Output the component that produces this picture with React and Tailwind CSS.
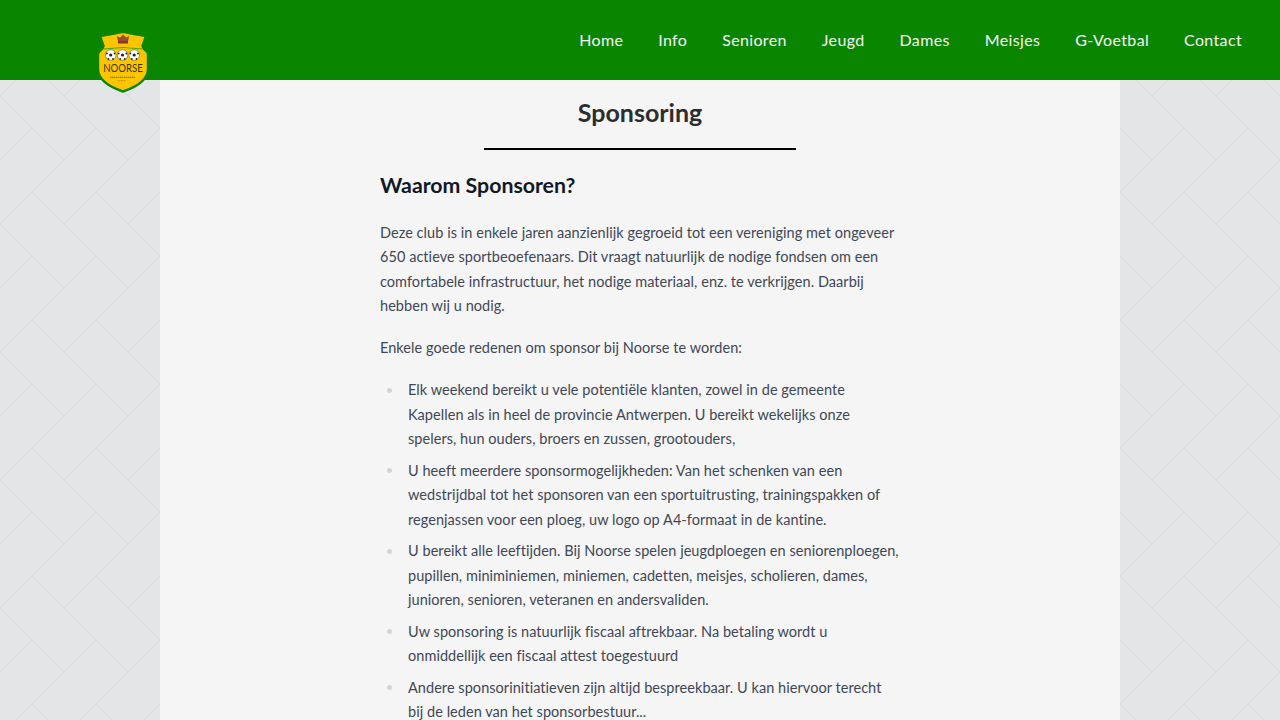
const NAV = ['Home', 'Info', 'Senioren', 'Jeugd', 'Dames', 'Meisjes', 'G-Voetbal', 'Contact'];

const REASONS = [
  'Elk weekend bereikt u vele potentiële klanten, zowel in de gemeente Kapellen als in heel de provincie Antwerpen. U bereikt wekelijks onze spelers, hun ouders, broers en zussen, grootouders,',
  'U heeft meerdere sponsormogelijkheden: Van het schenken van een wedstrijdbal tot het sponsoren van een sportuitrusting, trainingspakken of regenjassen voor een ploeg, uw logo op A4-formaat in de kantine.',
  'U bereikt alle leeftijden. Bij Noorse spelen jeugdploegen en seniorenploegen, pupillen, miniminiemen, miniemen, cadetten, meisjes, scholieren, dames, junioren, senioren, veteranen en andersvaliden.',
  'Uw sponsoring is natuurlijk fiscaal aftrekbaar. Na betaling wordt u onmiddellijk een fiscaal attest toegestuurd',
  'Andere sponsorinitiatieven zijn altijd bespreekbaar. U kan hiervoor terecht bij de leden van het sponsorbestuur...',
];

const Herringbone = () => (
  <svg className="absolute inset-0 h-full w-full" aria-hidden="true">
    <defs>
      <pattern id="herringbone" x="0" y="96" width="64" height="128" patternUnits="userSpaceOnUse">
        <path
          d="M32 32L-64 128M96 32L0 128M0 0L64 64M32 96L64 128"
          fill="none"
          stroke="#dddee1"
          strokeWidth="1.5"
        />
      </pattern>
    </defs>
    <rect width="100%" height="100%" fill="url(#herringbone)" />
  </svg>
);

const Ball = ({ cx }) => (
  <g>
    <circle cx={cx} cy="24" r="5.3" fill="#fff" stroke="#444" strokeWidth="0.5" />
    <circle cx={cx} cy="24" r="1.6" fill="#222" />
    <circle cx={cx - 3.8} cy="22.5" r="0.9" fill="#222" />
    <circle cx={cx + 3.8} cy="22.5" r="0.9" fill="#222" />
    <circle cx={cx - 2.3} cy="28" r="0.9" fill="#222" />
    <circle cx={cx + 2.3} cy="28" r="0.9" fill="#222" />
  </g>
);

const Logo = () => (
  <svg className="absolute left-[97px] top-[31px] overflow-visible" width="52" height="62" viewBox="0 0 52 62">
    <path
      d="M3 5Q16 3 26 0.8Q36 3 49 5L45.500 15Q46 18 49 20Q51 21 51 24V38Q51 52 26 60.500Q1 52 1 38V24Q1 21 3 20Q6 18 6.500 15Z"
      fill="#fdc500"
      stroke="#0a8500"
      strokeWidth="2.4"
      strokeLinejoin="round"
    />
    <path d="M7 18Q26 15 45 18" fill="none" stroke="#49a80f" strokeWidth="1" />
    <path d="M19.800 5L23 6.500L26 3.500L29 6.500L32.200 5L31 10.500H21Z" fill="#9c4a30" />
    <rect x="21" y="10" width="10" height="2.5" fill="#7f3a24" />
    <Ball cx={13.7} />
    <Ball cx={25.5} />
    <Ball cx={37.2} />
    <text
      x="26"
      y="41.3"
      textAnchor="middle"
      fontSize="11.5"
      textLength="39.5"
      lengthAdjust="spacingAndGlyphs"
      fill="#3a360c"
      style={{ fontFamily: 'Lato, sans-serif' }}
    >
      NOORSE
    </text>
    <path d="M13 46.300H38" stroke="#8f7a10" strokeWidth="1.2" strokeDasharray="1.5 0.5" />
    <path d="M21 49.700H28" stroke="#a88f10" strokeWidth="1" strokeDasharray="1 0.5" />
  </svg>
);

const App = () => {
  return (
    <div
      className="relative h-screen overflow-hidden bg-[#e4e5e7] text-[14.5px] leading-[24.5px] text-[#3f4756]"
      style={{ fontFamily: 'Lato, sans-serif' }}
    >
      <Herringbone />

      <main className="relative mx-auto h-full w-[960px] bg-[#f5f5f5] pt-[80px]">
        <h1 className="mt-[16px] text-center text-[25px] leading-[32px] font-bold text-[#2d2d2d]">
          Sponsoring
        </h1>
        <div className="mx-auto mt-[20px] h-[2px] w-[312px] bg-black" />

        <article className="mx-auto mt-[21px] w-[520px]">
          <h2 className="text-[21.3px] leading-[28px] font-bold text-[#111827]">
            Waarom Sponsoren?
          </h2>
          <p className="mt-[21.6px] tracking-[0.05px]">
            Deze club is in enkele jaren aanzienlijk gegroeid tot een vereniging met ongeveer 650 actieve sportbeoefenaars. Dit vraagt natuurlijk de nodige fondsen om een comfortabele infrastructuur, het nodige materiaal, enz. te verkrijgen. Daarbij hebben wij u nodig.
          </p>
          <p className="mt-[17.5px] tracking-[0.05px]">Enkele goede redenen om sponsor bij Noorse te worden:</p>
          <ul className="mt-[17.5px] flex flex-col gap-[7px] tracking-[0.05px]">
            {REASONS.map((reason) => (
              <li key={reason} className="flex">
                <span className="flex h-[24.5px] w-[28px] shrink-0 items-center pl-[7px]">
                  <span className="h-[5px] w-[5px] rounded-full bg-[#d1d5db]" />
                </span>
                <span>{reason}</span>
              </li>
            ))}
          </ul>
        </article>
      </main>

      <header className="absolute inset-x-0 top-0 flex h-[80px] items-center justify-end gap-[35px] bg-[#0a8500] pr-[38px]">
        {NAV.map((item) => (
          <a key={item} href="#" className="text-[16px] tracking-[0.35px] text-[#f5f5f5]">
            {item}
          </a>
        ))}
      </header>
      <Logo />
    </div>
  );
};

export default App;
